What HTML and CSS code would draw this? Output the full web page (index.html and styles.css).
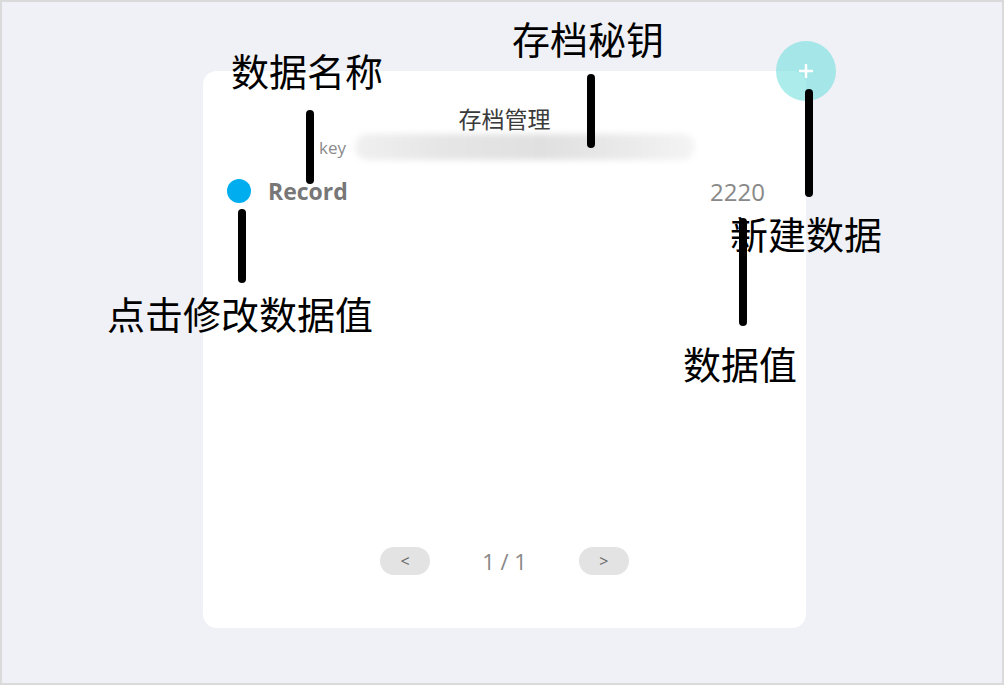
FILE: index.html
```html
<!DOCTYPE html>
<html lang="zh">
<head>
<meta charset="utf-8">
<title>存档管理</title>
<link rel="stylesheet" href="styles.css">
</head>
<body>
<div class="page">
  <div class="card">
    <div class="title">存档管理</div>
    <div class="key-row">
      <span class="key-label">key</span>
      <div class="key-field"></div>
    </div>
    <div class="record-row">
      <span class="dot"></span>
      <span class="rec-name">Record</span>
      <span class="rec-value">2220</span>
    </div>
    <div class="spacer"></div>
    <div class="pager">
      <button class="pg-btn">&lt;</button>
      <span class="pg-text">1 / 1</span>
      <button class="pg-btn">&gt;</button>
    </div>
  </div>

  <div class="add-btn">
    <svg width="16" height="16" viewBox="0 0 16 16"><path d="M8 1v14M1 8h14" stroke="#fff" stroke-width="2.5" fill="none"/></svg>
  </div>

  <div class="note note-secret">存档秘钥</div>
  <div class="note note-name">数据名称</div>
  <div class="note note-new">新建数据</div>
  <div class="note note-value">数据值</div>
  <div class="note note-click">点击修改数据值</div>

  <div class="bar bar-secret"></div>
  <div class="bar bar-name"></div>
  <div class="bar bar-add"></div>
  <div class="bar bar-value"></div>
  <div class="bar bar-dot"></div>
</div>
</body>
</html>
```
FILE: styles.css
```css
html, body {
  margin: 0;
  padding: 0;
}
body {
  font-family: "Open Sans", "Noto Sans", "Noto Sans CJK SC", sans-serif;
}
.page {
  position: relative;
  width: 1004px;
  height: 685px;
  box-sizing: border-box;
  border: 2px solid #dadada;
  background: #f0f1f6;
  padding: 69px 0 0 201px;
  overflow: hidden;
}
.card {
  width: 603px;
  height: 557px;
  background: #fff;
  border-radius: 14px;
  box-sizing: border-box;
  display: flex;
  flex-direction: column;
  padding: 33px 0 52px;
}
.title {
  text-align: center;
  font-family: "Noto Sans CJK SC", sans-serif;
  font-size: 23px;
  line-height: 28px;
  color: #3a3a3a;
}
.key-row {
  display: flex;
  align-items: center;
  margin: 0 0 0 116px;
  height: 30px;
}
.key-label {
  width: 36px;
  font-size: 17px;
  color: #8a8a8a;
}
.key-field {
  width: 340px;
  height: 26px;
  border-radius: 13px;
  background: linear-gradient(90deg, #f0f0f0 0%, #e6e6e6 25%, #e0e0e0 55%, #e8e8e8 75%, #f4f4f4 100%);
  filter: blur(3px);
}
.record-row {
  display: flex;
  align-items: center;
  margin-top: 14px;
  height: 30px;
  padding: 0 41px 0 24px;
}
.dot {
  width: 24px;
  height: 24px;
  border-radius: 50%;
  background: #00aeef;
  flex: none;
}
.rec-name {
  margin-left: 17px;
  font-size: 23px;
  font-weight: 700;
  color: #777;
}
.rec-value {
  margin-left: auto;
  font-size: 24px;
  color: #888;
}
.spacer {
  flex: 1;
}
.pager {
  display: flex;
  justify-content: center;
  align-items: center;
  gap: 52px;
}
.pg-btn {
  width: 50px;
  height: 28px;
  border: none;
  border-radius: 14px;
  background: #e3e3e3;
  color: #666;
  font-family: "Open Sans", sans-serif;
  font-size: 16px;
  padding: 0;
}
.pg-text {
  font-size: 22px;
  color: #888;
}
.add-btn {
  position: absolute;
  left: 774px;
  top: 39px;
  width: 60px;
  height: 60px;
  border-radius: 50%;
  background: rgba(90, 220, 218, 0.5);
  display: flex;
  align-items: center;
  justify-content: center;
}
.note {
  position: absolute;
  font-family: "Noto Sans CJK SC", sans-serif;
  font-size: 38px;
  line-height: 1;
  color: #000;
  white-space: nowrap;
}
.note-secret { left: 510px; top: 17px; }
.note-name { left: 229px; top: 49px; }
.note-new { left: 728px; top: 212px; }
.note-value { left: 681px; top: 342px; }
.note-click { left: 105px; top: 292px; }
.bar {
  position: absolute;
  width: 8px;
  background: #000;
  border-radius: 4px;
}
.bar-secret { left: 585px; top: 72px; height: 74px; }
.bar-name { left: 304px; top: 108px; height: 74px; }
.bar-add { left: 803px; top: 87px; height: 108px; }
.bar-value { left: 737px; top: 216px; height: 108px; }
.bar-dot { left: 236px; top: 207px; height: 74px; }
```
